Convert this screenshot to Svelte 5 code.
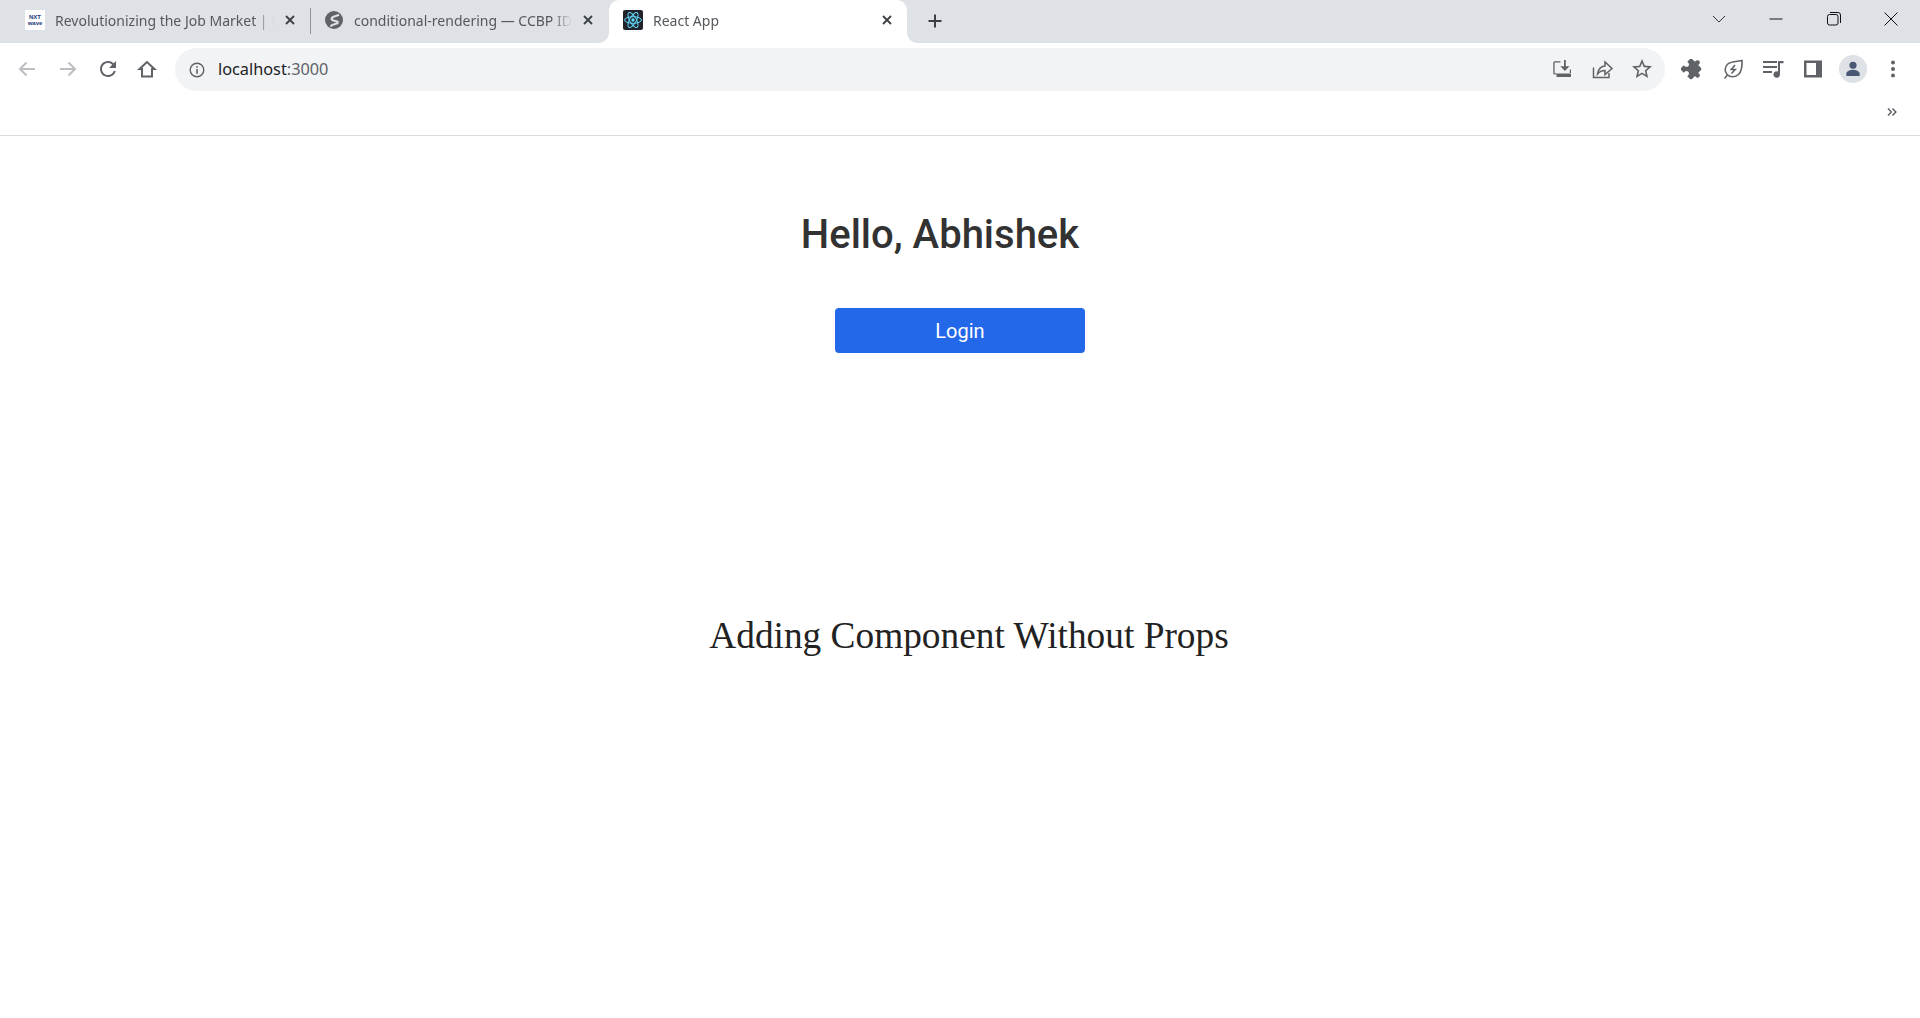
<script>
	const toolbarGrey = '#5f6368';
</script>

<div class="browser">
	<div class="tabstrip">
		<div class="tab first">
			<svg class="favicon" viewBox="0 0 20 20">
				<rect width="20" height="20" fill="#fff" />
				<text x="10" y="9" font-size="6" font-weight="700" text-anchor="middle" fill="#1c3a7a">NXT</text>
				<text x="10" y="14.500" font-size="6" font-weight="700" text-anchor="middle" fill="#1c3a7a">wave</text>
			</svg>
			<span class="title">Revolutionizing the Job Market | NxtWave</span>
			<svg class="close" viewBox="0 0 12 12"><path d="M2 2l8 8M10 2l-8 8" /></svg>
		</div>
		<div class="sep"></div>
		<div class="tab second">
			<svg class="favicon globe" viewBox="0 0 18 18">
				<circle cx="9" cy="9" r="9" fill={toolbarGrey} />
				<path d="M14 3.800C9.500 5.500 5.500 6 7 8.800c1 1.800 6.300.6 5.800 2.800C12.300 13.500 7.500 12.500 5.500 15.500" fill="none" stroke="#dee1e6" stroke-width="2.200" />
			</svg>
			<span class="title">conditional-rendering — CCBP IDE</span>
			<svg class="close" viewBox="0 0 12 12"><path d="M2 2l8 8M10 2l-8 8" /></svg>
		</div>
		<div class="tab active">
			<svg class="favicon" viewBox="0 0 20 20">
				<rect width="20" height="20" rx="2" fill="#20232a" />
				<g fill="none" stroke="#61dafb" stroke-width="1">
					<ellipse cx="10" cy="10" rx="8.4" ry="3.3" />
					<ellipse cx="10" cy="10" rx="8.4" ry="3.3" transform="rotate(60 10 10)" />
					<ellipse cx="10" cy="10" rx="8.4" ry="3.3" transform="rotate(120 10 10)" />
				</g>
				<circle cx="10" cy="10" r="1.7" fill="#61dafb" />
			</svg>
			<span class="title">React App</span>
			<svg class="close" viewBox="0 0 12 12"><path d="M2 2l8 8M10 2l-8 8" /></svg>
		</div>
		<svg class="newtab" viewBox="0 0 16 16"><path d="M8 1.5v13M1.5 8h13" /></svg>

		<div class="window-controls">
			<svg class="winbtn chevron" viewBox="0 0 14 8"><path d="M1 1l6 6 6-6" /></svg>
			<svg class="winbtn" viewBox="0 0 14 14"><path d="M0.5 7h13" /></svg>
			<svg class="winbtn" viewBox="0 0 14 14">
				<rect x="0.5" y="2.5" width="10.5" height="10.5" rx="2" />
				<path d="M3 0.5h8a2.5 2.5 0 0 1 2.500 2.500v8" />
			</svg>
			<svg class="winbtn" viewBox="0 0 14 14"><path d="M0.5 0.5l13 13M13.500 0.500l-13 13" /></svg>
		</div>
	</div>

	<div class="toolbar">
		<div class="nav">
			<svg class="ico stroke dim" viewBox="0 0 24 24"><path d="M20 12H5M11.500 5.500L5 12l6.500 6.500" /></svg>
			<svg class="ico stroke dim" viewBox="0 0 24 24"><path d="M4 12h15M12.500 5.500L19 12l-6.500 6.500" /></svg>
			<svg class="ico" viewBox="0 0 24 24"><path d="M17.650 6.350A7.958 7.958 0 0 0 12 4c-4.420 0-7.990 3.580-7.990 8s3.570 8 7.990 8c3.730 0 6.840-2.550 7.730-6h-2.080A5.990 5.990 0 0 1 12 18c-3.310 0-6-2.690-6-6s2.690-6 6-6c1.660 0 3.140.690 4.220 1.780L13 11h7V4l-2.350 2.350z" /></svg>
			<svg class="ico stroke home" viewBox="0 0 24 24"><path d="M12 5L4.500 12H7V19.500H17V12H19.500Z" /></svg>
		</div>

		<div class="omnibox">
			<svg class="info" viewBox="0 0 16 16">
				<circle cx="8" cy="8" r="6.800" fill="none" stroke="#5f6368" stroke-width="1.400" />
				<rect x="7.200" y="7" width="1.600" height="4.800" fill="#5f6368" />
				<rect x="7.200" y="4.200" width="1.600" height="1.600" fill="#5f6368" />
			</svg>
			<span class="url"><span class="host">localhost</span>:3000</span>
			<div class="omni-actions">
				<svg class="ico" viewBox="0 0 24 24">
					<path d="M10.500 4.200H4.800A1.500 1.500 0 0 0 3.300 5.700v10.300A1.500 1.500 0 0 0 4.800 17.500H6.500v-1.200H4.600V5.500H10.500z" />
					<path d="M14 3h1.800v6.200H19.500l-4.600 4.800-4.600-4.800H14z" />
					<path d="M19.800 12.500h1.200v3.500h-1.200z" />
					<rect x="6.500" y="16.500" width="14.500" height="3.600" rx="0.500" />
				</svg>
				<svg class="ico stroke thin" viewBox="0 0 24 24">
					<path d="M3.500 10.500V20.500H19V16" />
					<path d="M7.500 17C8 12 11.500 9 15 9V5l7 6.500L15 17.500V13.500C12 13.500 9.500 14.500 7.500 17Z" />
				</svg>
				<svg class="ico" viewBox="0 0 24 24"><path d="M22 9.240l-7.190-.620L12 2 9.190 8.630 2 9.240l5.460 4.730L5.820 21 12 17.270 18.180 21l-1.630-7.030L22 9.240zM12 15.400l-3.760 2.270 1-4.280-3.320-2.880 4.380-.380L12 6.100l1.710 4.040 4.380.380-3.320 2.880 1 4.280L12 15.400z" /></svg>
			</div>
		</div>

		<div class="extensions">
			<svg class="ico" viewBox="0 0 24 24"><path transform="rotate(45 12 12) scale(.92) translate(1 1)" d="M20.500 11H19V7c0-1.100-.9-2-2-2h-4V3.500C13 2.120 11.880 1 10.500 1S8 2.120 8 3.500V5H4c-1.100 0-1.990.9-1.990 2v3.800H3.500c1.490 0 2.700 1.210 2.700 2.700s-1.210 2.700-2.700 2.700H2V20c0 1.100.9 2 2 2h3.800v-1.500c0-1.490 1.210-2.700 2.700-2.700 1.490 0 2.700 1.210 2.700 2.700V22H17c1.100 0 2-.9 2-2v-4h1.500c1.380 0 2.500-1.120 2.500-2.500S21.880 11 20.500 11z" /></svg>
			<svg class="ico stroke leaf" viewBox="0 0 24 24">
				<path d="M21 3.500C21 3.500 21.500 13.500 17.500 17.500C14.500 20.500 9 20.500 6.300 17.800C3.300 14.800 3.500 10 6.800 7C10 4.200 17 4.500 21 3.500Z" />
				<path d="M6.500 18L3.500 21.500" />
				<path d="M14 8L10.300 12.500H14.200L10.500 16.500" />
			</svg>
			<svg class="ico" viewBox="0 0 24 24">
				<rect x="2" y="4" width="14" height="2" />
				<rect x="2" y="9" width="14" height="2" />
				<rect x="2" y="14" width="9" height="2" />
				<path d="M17 4h5.500v2.200H19V17.500a3.300 3.300 0 1 1-2-3z" />
			</svg>
			<svg class="ico" viewBox="0 0 24 24"><path fill-rule="evenodd" d="M3 3.500h18v17H3zM5.500 6v12H15V6z" /></svg>
			<div class="avatar">
				<svg viewBox="0 0 24 24" fill="#4a5874"><circle cx="12" cy="7.500" r="4.300" /><path d="M4 20.500v-3c0-2.800 5-4.500 8-4.500s8 1.700 8 4.500v3z" /></svg>
			</div>
			<svg class="ico" viewBox="0 0 24 24"><circle cx="12" cy="5.500" r="2" /><circle cx="12" cy="12" r="2" /><circle cx="12" cy="18.500" r="2" /></svg>
		</div>
	</div>

	<div class="bookmarks">
		<svg class="more" viewBox="0 0 10 10"><path d="M1 1.500L4.300 5 1 8.500M5.500 1.500L8.800 5 5.500 8.500" /></svg>
	</div>
</div>

<main class="page">
	<h1>Hello, Abhishek</h1>
	<button class="login">Login</button>
	<p class="note">Adding Component Without Props</p>
</main>

<style>
	:global(body) {
		background: #fff;
	}

	.browser {
		font-family: "Noto Sans", "Open Sans", sans-serif;
		border-bottom: 1px solid #dadce0;
	}

	.tabstrip {
		height: 43px;
		background: #dee1e6;
		display: flex;
		padding-left: 8px;
	}

	.tab {
		position: relative;
		display: flex;
		align-items: center;
		height: 40px;
		padding: 0 14px 3px 17px;
		gap: 10px;
	}

	.tab.first {
		width: 271px;
	}

	.tab.second {
		width: 268.500px;
		padding-left: 14px;
		padding-right: 9.500px;
	}

	.tab.active {
		width: 270px;
		padding-left: 14px;
		padding-right: 13.500px;
		background: #fff;
		border-radius: 10px 10px 0 0;
		margin-left: 6px;
	}

	.tab.active::before,
	.tab.active::after {
		content: '';
		position: absolute;
		bottom: 0;
		width: 10px;
		height: 10px;
	}

	.tab.active::before {
		left: -10px;
		background: radial-gradient(circle at 0 0, transparent 9.500px, #fff 10px);
	}

	.tab.active::after {
		right: -10px;
		background: radial-gradient(circle at 100% 0, transparent 9.500px, #fff 10px);
	}

	.favicon {
		width: 20px;
		height: 20px;
		flex: none;
		font-family: "Liberation Sans", sans-serif;
	}

	.globe {
		width: 18px;
		height: 18px;
		margin-right: 1px;
	}

	.title {
		flex: 1;
		min-width: 0;
		white-space: nowrap;
		overflow: hidden;
		font-size: 14px;
		color: #55585c;
		mask-image: linear-gradient(to right, #000 calc(100% - 20px), transparent);
	}

	.close {
		width: 12px;
		height: 12px;
		flex: none;
		fill: none;
		stroke: #3c4043;
		stroke-width: 1.800;
	}

	.sep {
		width: 1px;
		height: 26px;
		margin-top: 8px;
		background: #8f9297;
	}

	.newtab {
		width: 16px;
		height: 16px;
		margin: 13px 0 0 20.500px;
		fill: none;
		stroke: #3c4043;
		stroke-width: 2;
	}

	.window-controls {
		margin-left: auto;
		display: flex;
		align-items: flex-start;
		padding: 12px 22px 0 0;
		gap: 43.300px;
	}

	.winbtn {
		width: 14px;
		height: 14px;
		fill: none;
		stroke: #111;
		stroke-width: 1;
	}

	.chevron {
		margin-top: 3px;
		height: 8px;
		stroke: #333;
	}

	.toolbar {
		height: 48px;
		background: #fff;
		display: flex;
		align-items: flex-start;
		padding-top: 5px;
		box-sizing: border-box;
	}

	.nav {
		display: flex;
		align-items: center;
		width: 175px;
		height: 42px;
		padding-left: 15px;
		box-sizing: border-box;
		gap: 16.500px;
	}

	.ico {
		width: 24px;
		height: 24px;
		flex: none;
		fill: #5f6368;
	}

	.ico.stroke {
		fill: none;
		stroke: #5f6368;
		stroke-width: 2;
	}

	.ico.home {
		margin-left: -1.500px;
	}

	.ico.thin {
		stroke-width: 1.500;
	}

	.ico.leaf {
		stroke-width: 1.600;
	}

	.ico.dim {
		stroke: #bcbec2;
	}

	.omnibox {
		width: 1490px;
		height: 43px;
		background: #f1f3f4;
		border-radius: 22px;
		display: flex;
		align-items: center;
		padding-left: 14px;
		box-sizing: border-box;
	}

	.info {
		width: 16px;
		height: 16px;
		flex: none;
	}

	.url {
		margin-left: 13px;
		margin-bottom: 1px;
		font-size: 16.300px;
		color: #5f6368;
	}

	.host {
		color: #202124;
	}

	.omni-actions {
		margin-left: auto;
		display: flex;
		align-items: center;
		gap: 16px;
		padding-right: 11px;
		padding-bottom: 1px;
	}

	.extensions {
		display: flex;
		align-items: center;
		height: 42px;
		padding-left: 16px;
		gap: 16px;
	}

	.avatar {
		width: 28px;
		height: 28px;
		border-radius: 50%;
		background: #dee1e6;
		display: flex;
		align-items: center;
		justify-content: center;
		margin: 0 -2px;
	}

	.avatar svg {
		width: 20px;
		height: 20px;
	}

	.bookmarks {
		height: 44px;
		background: #fff;
		display: flex;
		justify-content: flex-end;
		align-items: center;
		padding: 0 23px 3px 0;
		box-sizing: border-box;
	}

	.more {
		width: 10px;
		height: 10px;
		fill: none;
		stroke: #5f6368;
		stroke-width: 1.500;
	}

	.page {
		display: flex;
		flex-direction: column;
		align-items: center;
	}

	h1 {
		margin: 75px 40px 0 0;
		font-family: Roboto, sans-serif;
		font-weight: 500;
		font-size: 40px;
		line-height: 48px;
		color: #323232;
	}

	.login {
		width: 250px;
		height: 45px;
		margin-top: 49px;
		border: none;
		border-radius: 4px;
		background: #2468ea;
		color: #fff;
		font-family: Roboto, sans-serif;
		font-size: 20px;
	}

	.note {
		margin: 261px 0 0 18px;
		font-family: "Liberation Serif", serif;
		font-size: 37.330px;
		line-height: 43px;
		color: #222;
	}
</style>
